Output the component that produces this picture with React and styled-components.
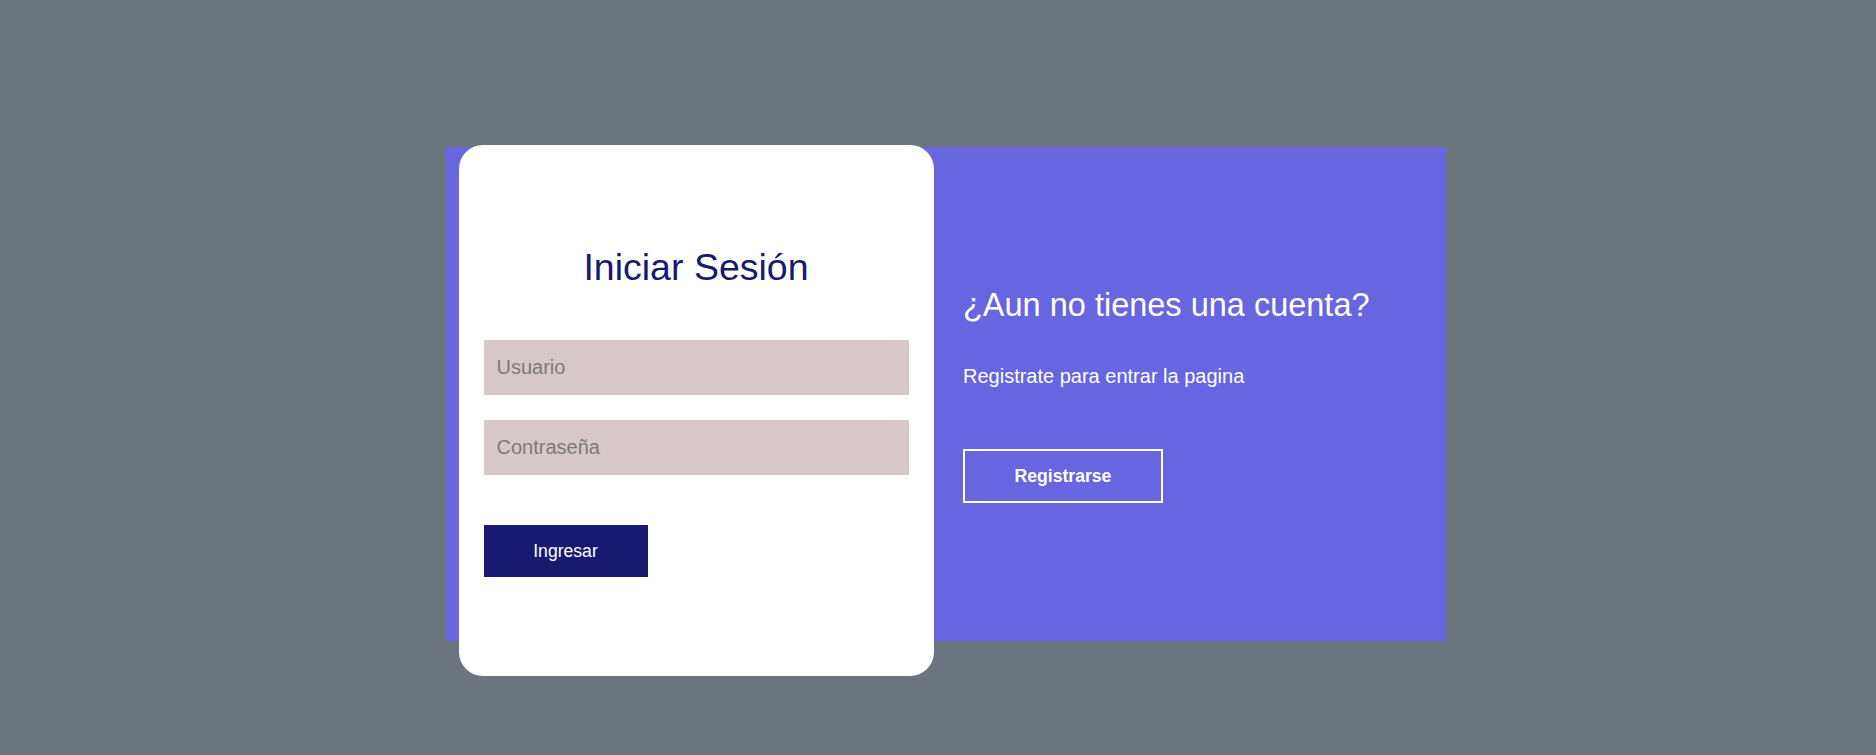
import React from 'react';
import styled, { createGlobalStyle } from 'styled-components';

const GlobalStyle = createGlobalStyle`
  body {
    margin: 0;
    background: #6c757d;
    font-family: "Liberation Sans", Arial, sans-serif;
  }
`;

const Page = styled.div`
  min-height: 755px;
  box-sizing: border-box;
  padding: 147px 0 0 16px;
  display: flex;
  justify-content: center;
  align-items: flex-start;
`;

const Panel = styled.div`
  width: 1000px;
  height: 494px;
  background: #6666e0;
  display: grid;
  grid-template-columns: 500px 500px;
  grid-template-rows: 494px;
`;

const LoginCard = styled.div`
  width: 475px;
  height: 531px;
  margin: -2px auto 0;
  box-sizing: border-box;
  padding: 101px 25px 0;
  background: #ffffff;
  border-radius: 24px;
  display: flex;
  flex-direction: column;
`;

const Title = styled.h1`
  margin: 0 0 52px;
  color: #191970;
  font-size: 37.5px;
  font-weight: normal;
  text-align: center;
  line-height: 42px;
`;

const Input = styled.input`
  display: block;
  width: 100%;
  height: 55px;
  box-sizing: border-box;
  margin-bottom: ${p => (p.$last ? '50px' : '25px')};
  padding: 0 13px;
  border: none;
  outline: none;
  background: #d6c8c8;
  font-family: inherit;
  font-size: 20px;
  color: #333;

  &::placeholder {
    color: #7a7a7a;
  }
`;

const SubmitButton = styled.button`
  width: 164px;
  height: 52px;
  border: none;
  background: #191970;
  color: #ffffff;
  font-family: inherit;
  font-size: 17.6px;
  cursor: pointer;
`;

const SignupPane = styled.div`
  display: flex;
  flex-direction: column;
  align-items: flex-start;
  padding: 140px 0 0 17px;
  color: #ffffff;
`;

const SignupTitle = styled.h2`
  margin: 0 0 41px;
  font-size: 32.5px;
  font-weight: normal;
  line-height: 37px;
`;

const SignupText = styled.p`
  margin: 0 0 61px;
  font-size: 20px;
  line-height: 23px;
`;

const OutlineButton = styled.button`
  width: 200px;
  height: 54px;
  box-sizing: border-box;
  border: 2px solid #ffffff;
  background: transparent;
  color: #ffffff;
  font-family: inherit;
  font-size: 17.6px;
  font-weight: bold;
  cursor: pointer;
`;

const App = () => {
  return (
    <>
      <GlobalStyle />
      <Page>
        <Panel>
          <LoginCard>
            <Title>Iniciar Sesión</Title>
            <Input type="text" placeholder="Usuario" />
            <Input type="password" placeholder="Contraseña" $last />
            <SubmitButton>Ingresar</SubmitButton>
          </LoginCard>
          <SignupPane>
            <SignupTitle>¿Aun no tienes una cuenta?</SignupTitle>
            <SignupText>Registrate para entrar la pagina</SignupText>
            <OutlineButton>Registrarse</OutlineButton>
          </SignupPane>
        </Panel>
      </Page>
    </>
  );
};

export default App;
